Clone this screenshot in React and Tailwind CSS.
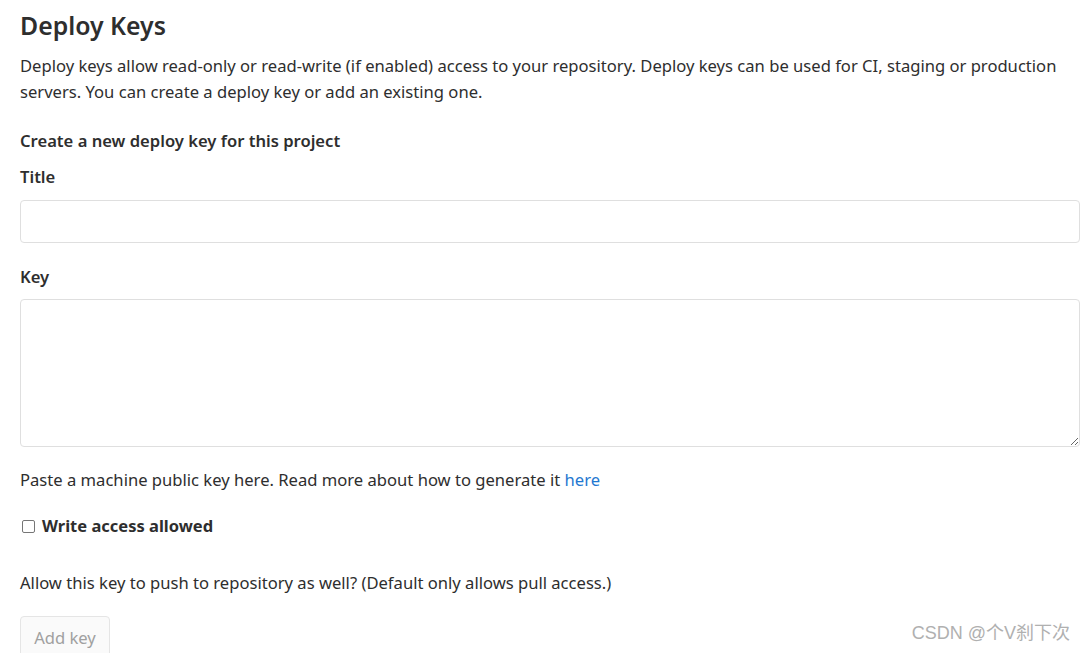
export default function App() {
  const font = { fontFamily: '"Noto Sans", "Open Sans", "Noto Sans CJK SC", sans-serif' };
  return (
    <div className="relative w-[1085px] h-[653px] overflow-hidden bg-white text-[#2e2e2e]" style={font}>
      <div className="pl-[20px] pr-[5px]">
        <h4 className="pt-[7px] text-[24.8px] leading-[36px] font-semibold text-[#2e2e2e]">Deploy Keys</h4>
        <p className="mt-[10px] text-[16.6px] leading-[26px]">
          Deploy keys allow read-only or read-write (if enabled) access to your repository. Deploy keys can be used for CI, staging or production servers. You can create a deploy key or add an existing one.
        </p>
        <h5 className="mt-[23px] text-[16.6px] leading-[26px] font-semibold">Create a new deploy key for this project</h5>
        <label className="block mt-[10px] text-[16.6px] leading-[26px] font-semibold">Title</label>
        <input className="block mt-[10px] w-[1060px] h-[43px] border border-[#dfdfdf] rounded-[4px] outline-none" />
        <label className="block mt-[21px] text-[16.6px] leading-[26px] font-semibold">Key</label>
        <textarea className="block mt-[9px] w-[1060px] h-[148px] border border-[#dfdfdf] rounded-[4px] outline-none" />
        <p className="mt-[20px] text-[16.6px] leading-[26px]">
          Paste a machine public key here. Read more about how to generate it <a className="text-[#1f78d1]">here</a>
        </p>
        <div className="mt-[20px] flex items-center gap-[7px]">
          <span className="ml-[2px] w-[13px] h-[13px] border border-[#767676] rounded-[2px] bg-white" />
          <span className="text-[16.5px] leading-[26px] font-bold text-[#2e2e2e]">Write access allowed</span>
        </div>
        <p className="mt-[31px] text-[16.6px] leading-[26px]">
          Allow this key to push to repository as well? (Default only allows pull access.)
        </p>
        <button className="block mt-[20px] w-[90px] h-[44px] border border-[#e5e5e5] rounded-[4px] bg-[#fafafa] text-[#a0a0a0] text-[16.6px]">Add key</button>
      </div>
      <div className="absolute right-[15px] bottom-[6px] text-[18px] text-[#b0b0b0]" style={{ fontFamily: '"Liberation Sans", "Noto Sans CJK SC", sans-serif' }}>
        CSDN @个V刹下次
      </div>
    </div>
  );
}
